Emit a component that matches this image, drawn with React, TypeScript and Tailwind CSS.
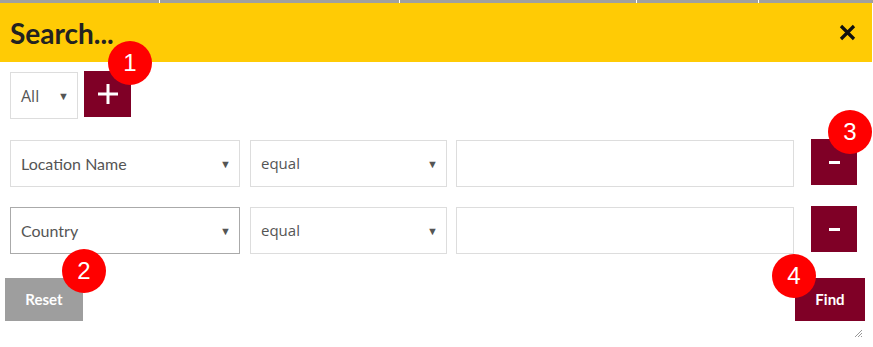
const lato = { fontFamily: 'Lato, "Open Sans", sans-serif' };

const Badge = ({ n, className }: { n: string; className: string }) => (
  <div
    className={`absolute w-[44px] h-[44px] rounded-full bg-[#ff0000] text-white flex items-center justify-center text-[24px] leading-none ${className}`}
    style={{ fontFamily: '"Liberation Sans", Arial, sans-serif' }}
  >
    {n}
  </div>
);

const Caret = () => (
  <span className="text-[#555] text-[11px] leading-none">▼</span>
);

const Select = ({
  label,
  width,
  border = 'border-[#ddd]',
  font = 'lato',
}: {
  label: string;
  width: string;
  border?: string;
  font?: 'lato' | 'open';
}) => (
  <div
    className={`${width} h-[47px] border ${border} bg-white flex items-center justify-between pl-[10px] pr-[8px] text-[#555]`}
  >
    <span
      className={font === 'lato' ? 'text-[16px]' : 'text-[15px]'}
      style={{ fontFamily: font === 'lato' ? 'Lato, sans-serif' : '"Open Sans", sans-serif' }}
    >
      {label}
    </span>
    <Caret />
  </div>
);

const MinusButton = () => (
  <button className="w-[46px] h-[46px] bg-[#7f0026] flex items-center justify-center">
    <span className="block w-[11px] h-[3px] bg-white" />
  </button>
);

export default function App() {
  return (
    <div className="relative w-[873px] h-[347px] bg-white overflow-hidden" style={lato}>
      {/* grid header strip behind the dialog */}
      <div className="flex h-[3px] gap-[1px] bg-white">
        <div className="w-[159px] bg-[#a0a0a0]" />
        <div className="w-[239px] bg-[#a0a0a0]" />
        <div className="w-[236px] bg-[#a0a0a0]" />
        <div className="w-[121px] bg-[#a0a0a0]" />
        <div className="flex-1 bg-[#a0a0a0]" />
      </div>

      <div className="h-[59px] bg-[#ffcb05] flex items-center justify-between pl-[10px] pr-[16px] mr-[1px]">
        <h1 className="text-[28px] font-bold leading-none text-[#222]">Search...</h1>
        <svg width="17" height="17" viewBox="0 0 17 17">
          <path d="M2 2 L15 15 M15 2 L2 15" stroke="#111" strokeWidth="3.2" strokeLinecap="butt" />
        </svg>
      </div>

      <div className="px-[10px] pt-[9px]">
        <div className="flex items-start gap-[6px]">
          <div className="mt-[1px] w-[68px] h-[47px] border border-[#ddd] flex items-center justify-between pl-[10px] pr-[8px] text-[#555]">
            <span className="text-[16px]" style={{ fontFamily: '"Open Sans", sans-serif' }}>
              All
            </span>
            <Caret />
          </div>
          <button className="w-[47px] h-[46px] bg-[#7f0026] flex items-center justify-center">
            <svg width="20" height="20" viewBox="0 0 20 20">
              <path d="M10 0 V20 M0 10 H20" stroke="#fff" strokeWidth="3" />
            </svg>
          </button>
        </div>

        <div className="flex items-start mt-[20px]">
          <div className="mt-[1px] flex">
            <Select label="Location Name" width="w-[230px]" />
            <div className="ml-[10px]">
              <Select label="equal" width="w-[197px]" font="open" />
            </div>
            <div className="ml-[9px] w-[338px] h-[47px] border border-[#ddd]" />
          </div>
          <div className="ml-[17px]">
            <MinusButton />
          </div>
        </div>

        <div className="flex items-start mt-[19px]">
          <div className="mt-[1px] flex">
            <Select label="Country" width="w-[230px]" border="border-[#aaa]" />
            <div className="ml-[10px]">
              <Select label="equal" width="w-[197px]" font="open" />
            </div>
            <div className="ml-[9px] w-[338px] h-[47px] border border-[#ddd]" />
          </div>
          <div className="ml-[17px]">
            <MinusButton />
          </div>
        </div>
      </div>

      <div className="flex justify-between pl-[5px] pr-[8px] mt-[24px]">
        <button className="w-[78px] h-[43px] bg-[#9e9e9e] text-white font-bold text-[15px]">Reset</button>
        <button className="w-[70px] h-[43px] bg-[#7f0026] text-white font-bold text-[15px]">Find</button>
      </div>

      <svg className="absolute left-[854px] top-[329px]" width="9" height="9" viewBox="0 0 9 9">
        <path d="M8 1 L1 8 M8 4 L4 8 M8 7 L7 8" stroke="#999" strokeWidth="1" />
      </svg>

      <Badge n="1" className="left-[108px] top-[41px]" />
      <Badge n="3" className="left-[828px] top-[110px]" />
      <Badge n="2" className="left-[62px] top-[249px]" />
      <Badge n="4" className="left-[772px] top-[254px]" />
    </div>
  );
}
